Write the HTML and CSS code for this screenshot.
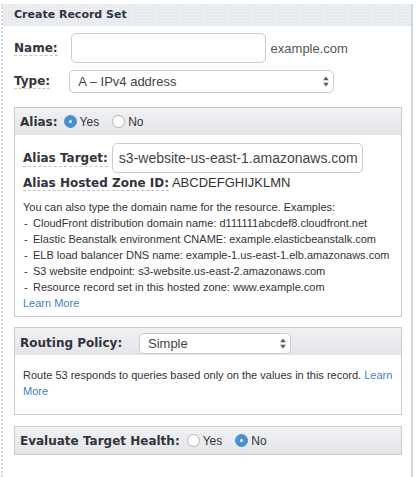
FILE: index.html
```html
<!DOCTYPE html>
<html>
<head>
<meta charset="utf-8">
<link rel="stylesheet" href="styles.css">
</head>
<body>
<div class="outer">
  <div class="title">Create Record Set</div>
  <div class="content">
    <div class="row name-row">
      <span class="label u">Name:</span>
      <div class="input name-input"></div>
      <span class="suffix">example.com</span>
    </div>
    <div class="row type-row">
      <span class="label u">Type:</span>
      <div class="select type-select">
        <span>A – IPv4 address</span>
        <svg class="arrows" width="6" height="11" viewBox="0 0 6 11"><path d="M3 0.5 L5.8 4.2 H0.2 Z" fill="#5f5a58"/><path d="M3 10.5 L5.8 6.8 H0.2 Z" fill="#5f5a58"/></svg>
      </div>
    </div>

    <section class="panel alias">
      <div class="phead">
        <span class="plabel">Alias:</span>
        <span class="radio"><span class="dot on"></span>Yes</span>
        <span class="radio"><span class="dot"></span>No</span>
      </div>
      <div class="pbody alias-body">
        <div class="target-row">
          <span class="label u">Alias Target:</span>
          <div class="input target">s3-website-us-east-1.amazonaws.com</div>
        </div>
        <div class="zone"><span class="label u">Alias Hosted Zone ID:</span> ABCDEFGHIJKLMN</div>
        <p class="help">You can also type the domain name for the resource. Examples:</p>
        <ul class="examples">
          <li>CloudFront distribution domain name: d111111abcdef8.cloudfront.net</li>
          <li>Elastic Beanstalk environment CNAME: example.elasticbeanstalk.com</li>
          <li>ELB load balancer DNS name: example-1.us-east-1.elb.amazonaws.com</li>
          <li>S3 website endpoint: s3-website.us-east-2.amazonaws.com</li>
          <li>Resource record set in this hosted zone: www.example.com</li>
        </ul>
        <a class="link" href="#">Learn More</a>
      </div>
    </section>

    <section class="panel routing">
      <div class="phead routing-head">
        <span class="plabel routing-label">Routing Policy:</span>
        <div class="select policy-select">
          <span>Simple</span>
          <svg class="arrows" width="6" height="11" viewBox="0 0 6 11"><path d="M3 0.5 L5.8 4.2 H0.2 Z" fill="#5f5a58"/><path d="M3 10.5 L5.8 6.8 H0.2 Z" fill="#5f5a58"/></svg>
        </div>
      </div>
      <div class="pbody routing-body">
        Route 53 responds to queries based only on the values in this record. <a class="link" href="#">Learn More</a>
      </div>
    </section>

    <section class="panel evaluate">
      <div class="phead">
        <span class="plabel">Evaluate Target Health:</span>
        <span class="radio"><span class="dot"></span>Yes</span>
        <span class="radio"><span class="dot on"></span>No</span>
      </div>
    </section>
  </div>
</div>
</body>
</html>
```

FILE: styles.css
```css
html, body {
  margin: 0;
  padding: 0;
  background: #fff;
}

body {
  font-family: "Liberation Sans", Arial, sans-serif;
  color: #333;
}

.outer {
  margin: 4px 0 0 1px;
  width: 408px;
  min-height: 473px;
  border-left: 2px dotted #d3d6da;
  border-right: 2px solid #d3d6da;
  box-sizing: content-box;
}

.title {
  height: 22px;
  line-height: 22px;
  padding-left: 11px;
  font-family: "DejaVu Sans", Verdana, sans-serif;
  font-weight: bold;
  font-size: 11px;
  color: #33333d;
  background-color: #e8ebee;
  background-image: radial-gradient(circle, #f6f7f8 0.7px, transparent 1px);
  background-size: 3px 3px;
}

.content {
  padding: 7px 9px 0 11px;
}

.row {
  display: flex;
  align-items: center;
}

.label {
  font-family: "DejaVu Sans", Verdana, sans-serif;
  font-weight: bold;
  font-size: 12px;
  color: #33333d;
}

.u {
  border-bottom: 1px dashed #c4c4c4;
}

.name-row .input {
  margin-left: 13px;
}

.type-row .select {
  margin-left: 19px;
}

.input {
  box-sizing: border-box;
  height: 30px;
  border: 1px solid #c9cdd1;
  border-radius: 5px;
  background: #fff;
}

.name-input {
  width: 195px;
}

.suffix {
  margin-left: 5px;
  font-size: 13px;
  color: #555;
}

.type-row {
  margin-top: 7px;
}

.select {
  box-sizing: border-box;
  display: flex;
  align-items: center;
  justify-content: space-between;
  border: 1px solid #c9cdd1;
  border-radius: 5px;
  background: #fff;
  font-size: 13px;
  color: #444;
  padding: 0 4px 0 8px;
}

.type-select {
  width: 265px;
  height: 23px;
}

.arrows {
  display: block;
}

.panel {
  border: 1px solid #cacdd1;
  background: #fff;
}

.alias {
  margin-top: 14px;
}

.phead {
  height: 27px;
  box-sizing: border-box;
  display: flex;
  align-items: center;
  padding-left: 5px;
  background: linear-gradient(#eff1f3 0%, #e9ebee 55%, #e2e4e6 100%);
}

.plabel {
  font-family: "DejaVu Sans", Verdana, sans-serif;
  font-weight: bold;
  font-size: 12px;
  color: #33333d;
  margin-right: 6px;
}

.radio {
  display: flex;
  align-items: center;
  font-size: 12px;
  color: #333;
  margin-right: 13px;
}

.dot {
  box-sizing: border-box;
  width: 13px;
  height: 13px;
  border-radius: 50%;
  border: 1px solid #b4b4b4;
  background: #fff;
  margin-right: 3px;
  position: relative;
}

.dot.on {
  border-color: #4a8fd6;
  background: #4a8fd6;
}

.dot.on::after {
  content: "";
  position: absolute;
  left: 4px;
  top: 4px;
  width: 3px;
  height: 3px;
  border-radius: 50%;
  background: #fff;
}

.pbody {
  font-size: 11px;
  line-height: 16px;
  color: #333;
}

.alias-body {
  padding: 8px 8px 5px 8px;
}

.target-row {
  display: flex;
  align-items: center;
}

.target {
  margin-left: 4px;
  width: 251px;
  padding-left: 6px;
  font-size: 14px;
  line-height: 28px;
  color: #444;
  white-space: nowrap;
  overflow: hidden;
}

.zone {
  margin-top: 2px;
  font-size: 13px;
  line-height: 16px;
  color: #333;
}

.help {
  margin: 8px 0 0 0;
}

.examples {
  list-style: none;
  margin: 0;
  padding: 0;
}

.examples li {
  display: flex;
  white-space: nowrap;
}

.examples li::before {
  content: "-";
  width: 10px;
  flex: none;
  padding-left: 1px;
  box-sizing: border-box;
}

.link {
  color: #3f7fc6;
  text-decoration: none;
}

.routing {
  margin-top: 10px;
}

.routing-head {
  align-items: flex-start;
  padding-top: 5px;
}

.routing-label {
  line-height: 21px;
  margin-right: 0;
  width: 119px;
  flex: none;
}

.policy-select {
  width: 152px;
  height: 21px;
  padding-right: 4px;
}

.routing-body {
  padding: 12px 8px 15px 8px;
}

.evaluate {
  margin-top: 11px;
}

.evaluate .plabel {
  margin-right: 7px;
}
```
